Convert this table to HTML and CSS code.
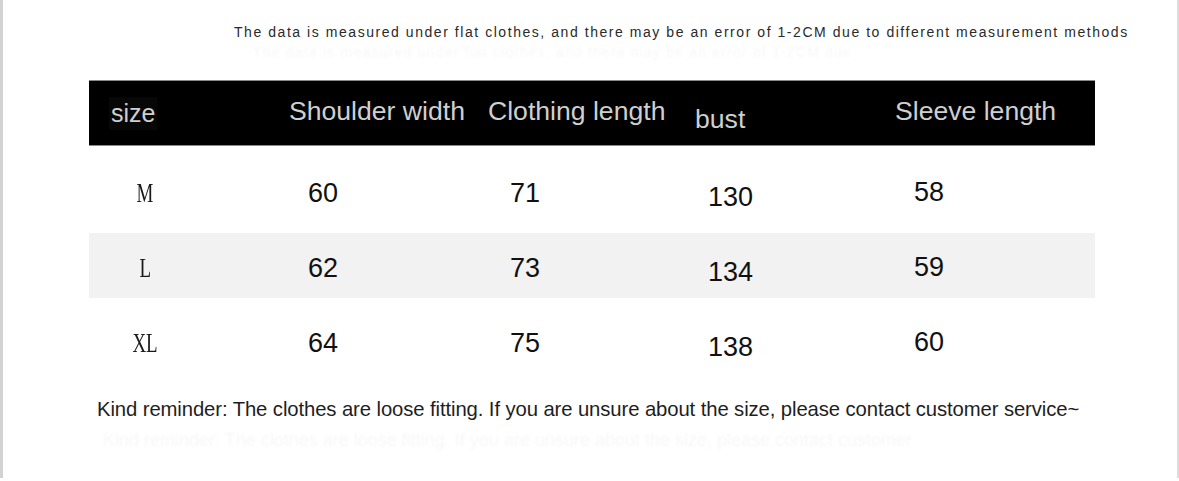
FILE: index.html
```html
<!DOCTYPE html>
<html lang="en">
<head>
<meta charset="utf-8">
<title>Size chart</title>
<link rel="stylesheet" href="styles.css">
</head>
<body>
<div class="page">
  <p class="note-top">The data is measured under flat clothes, and there may be an error of 1-2CM due to different measurement methods</p>
  <p class="ghost ghost-top">The data is measured under flat clothes, and there may be an error of 1-2CM due</p>
  <div class="table">
    <div class="thead">
      <div class="th th-size"><span class="size-box">size</span></div>
      <div class="th">Shoulder width</div>
      <div class="th">Clothing length</div>
      <div class="th th-bust">bust</div>
      <div class="th">Sleeve length</div>
    </div>
    <div class="row">
      <div class="td td-size"><span class="serif">M</span></div>
      <div class="td c2">60</div>
      <div class="td c3">71</div>
      <div class="td c4">130</div>
      <div class="td c5">58</div>
    </div>
    <div class="row row-alt">
      <div class="td td-size"><span class="serif">L</span></div>
      <div class="td c2">62</div>
      <div class="td c3">73</div>
      <div class="td c4">134</div>
      <div class="td c5">59</div>
    </div>
    <div class="row">
      <div class="td td-size"><span class="serif">XL</span></div>
      <div class="td c2">64</div>
      <div class="td c3">75</div>
      <div class="td c4">138</div>
      <div class="td c5">60</div>
    </div>
  </div>
  <p class="note-bottom">Kind reminder: The clothes are loose fitting. If you are unsure about the size, please contact customer service~</p>
  <p class="ghost ghost-bottom">Kind reminder: The clothes are loose fitting. If you are unsure about the size, please contact customer</p>
</div>
</body>
</html>
```

FILE: styles.css
```css
html, body {
  margin: 0;
  padding: 0;
  background: #ffffff;
}

.page {
  box-sizing: border-box;
  width: 1179px;
  height: 478px;
  border-left: 3px solid #d2d2d2;
  border-right: 2px solid #dcdcdc;
  background: #ffffff;
  display: flex;
  flex-direction: column;
  font-family: "Liberation Sans", Arial, sans-serif;
  overflow: hidden;
}

.note-top {
  margin: 0;
  padding: 23px 0 0 231px;
  font-size: 14px;
  line-height: 18px;
  letter-spacing: 1.55px;
  color: #2a2a2a;
  white-space: nowrap;
}

.ghost {
  margin: 0;
  color: #f7f7f7;
  filter: blur(1.2px);
  white-space: nowrap;
}

.ghost-top {
  padding: 2px 0 0 250px;
  font-size: 14px;
  line-height: 18px;
  letter-spacing: 1.2px;
  height: 18px;
}

.table {
  margin: 19px 0 0 86px;
  width: 1006px;
  display: flex;
  flex-direction: column;
}

.thead {
  box-sizing: border-box;
  height: 66px;
  background: #000000;
  border-top: 1px solid #8a8a8a;
  border-bottom: 1px solid #8a8a8a;
  display: grid;
  grid-template-columns: 200px 199px 207px 200px 200px;
  align-items: center;
  color: #cfcfcf;
  font-size: 26.6px;
  letter-spacing: 0;
  margin-bottom: 12px;
}

.th {
  white-space: nowrap;
  padding-bottom: 4px;
}

.th-size {
  padding-left: 20px;
  padding-top: 4px;
}

.size-box {
  display: inline-block;
  padding: 2px 2px;
  background: #070707;
  font-size: 25px;
}

.th-bust {
  padding-top: 12px;
  padding-bottom: 0;
}

.row {
  height: 65px;
  display: grid;
  grid-template-columns: 200px 199px 207px 200px 200px;
  align-items: center;
  margin-bottom: 10px;
  color: #111111;
  font-size: 27px;
}

.row-alt {
  background: #f2f2f2;
}

.td {
  padding-top: 5px;
  white-space: nowrap;
}

.td-size {
  width: 112px;
  text-align: center;
}

.serif {
  display: inline-block;
  font-family: "Liberation Serif", "Times New Roman", serif;
  font-size: 27px;
  color: #1a1a1a;
  transform: scaleX(0.7);
}

.c2 { padding-left: 19px; }
.c3 { padding-left: 22px; }
.c4 { padding-left: 13px; padding-top: 13px; }
.c5 { padding-left: 19px; padding-top: 3px; }

.note-bottom {
  margin: 13px 0 0 94px;
  font-size: 20.3px;
  line-height: 26px;
  color: #1e1e1e;
  white-space: nowrap;
  letter-spacing: -0.1px;
}

.ghost-bottom {
  padding: 8px 0 0 100px;
  font-size: 18px;
  line-height: 20px;
}
```
